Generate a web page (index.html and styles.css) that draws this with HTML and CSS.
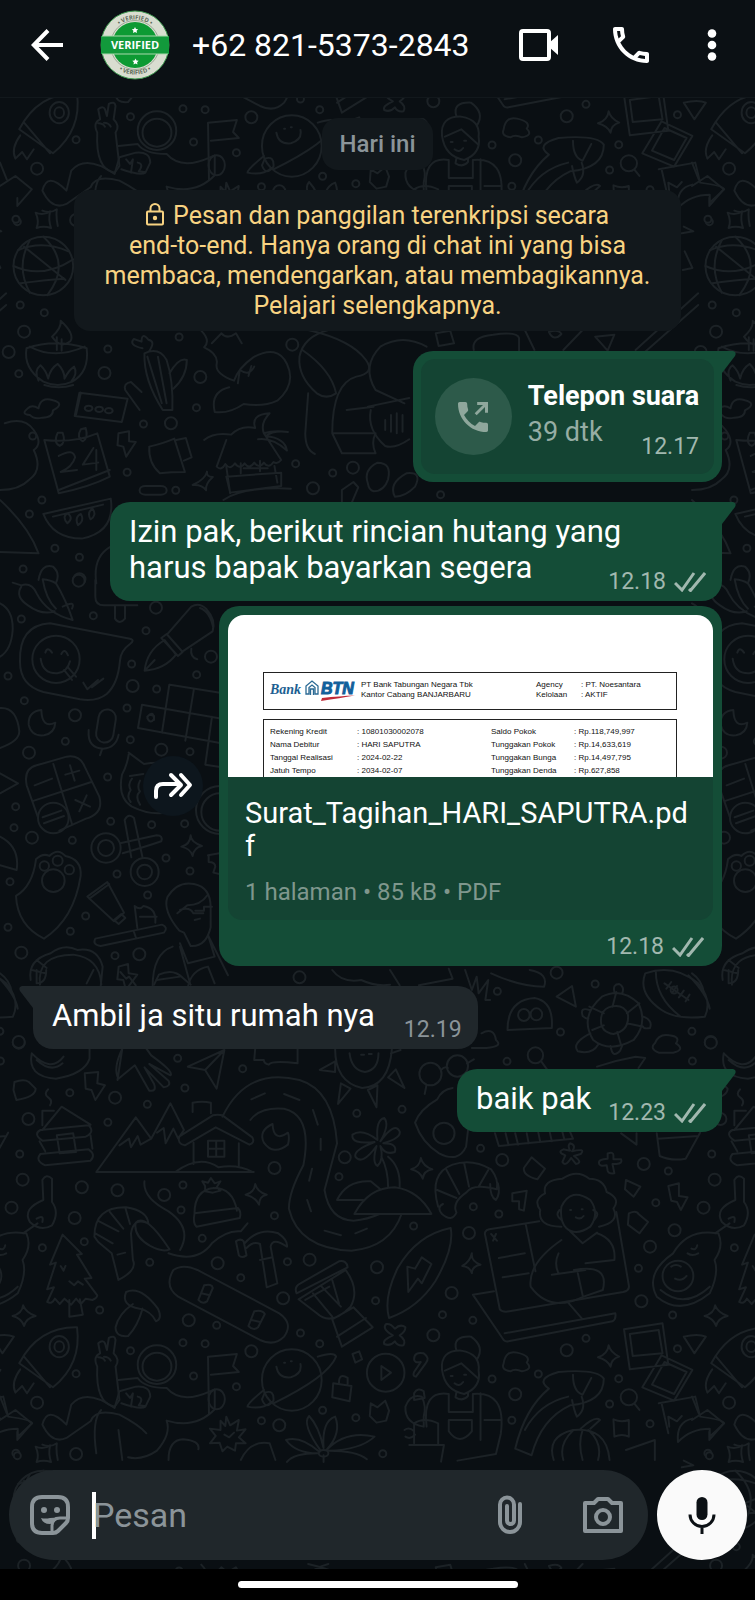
FILE: index.html
```html
<!DOCTYPE html>
<html lang="id">
<head>
  <meta charset="UTF-8" />
  <meta name="viewport" content="width=device-width, initial-scale=1.0"/>
  <title>+62 821-5373-2843</title>
  <link rel="stylesheet" href="styles.css">
</head>
<body>
  <svg class="wallpaper" aria-hidden="true">
    <defs>
      <g id="doodles">
        <!-- globe, candle, cactus, dog, hut, calendar -->
        <g transform="translate(0 90) scale(.4815 .3333)">
          <path class="dot" d="M36 395h0M42 645h0M92 668h0M224 777h0M372 741h0M39 851h0M408 953h0M298 1002h0M68 1038h0M264 1147h0M614 1121h0M691 1149h0M87 1230h0M61 1272h0M114 1375h0M165 1402h0M48 1437h0M365 1201h0M915 1214h0"/>
          <path class="dot-hole" d="M36 395h0M42 645h0M92 668h0M224 777h0M372 741h0M39 851h0M408 953h0M298 1002h0M68 1038h0M264 1147h0M614 1121h0M691 1149h0M87 1230h0M61 1272h0M114 1375h0M165 1402h0M48 1437h0M365 1201h0M915 1214h0"/>
          <path class="ring" d="M50 725h0M18 786h0M217 849h0M416 861h0M607 764h0M355 1000h0M650 1195h0M733 1133h0M165 1468h0"/>
          <path class="ring-hole" d="M50 725h0M18 786h0M217 849h0M416 861h0M607 764h0M355 1000h0M650 1195h0M733 1133h0M165 1468h0"/>
          <ellipse cx="90" cy="528" rx="62" ry="88"/>
          <path d="M62 450q-30 80 0 158M90 440q60 80 8 176M38 480q50-30 104 4M28 528q60 40 124-20M42 580q50-10 92-14M50 470l86 100"/>
          <path d="M74 368q16 10 30-4q-4 26 2 50q-16-8-30 0q6-20-2-46z"/>
          <path d="M55 775q60-30 125 0q6 70-30 100q-30 20-60 0q-42-40-35-100zM108 740q20-26 18-48q30 40 20 62q-20 24-38-14zM62 770q50 40 114 0M118 742v38M128 748v34M80 872q-10-30 4-46q12 16 16 40q4-30 20-44q14 20 14 44q8-24 20-36q8 20-6 44M92 885q30 14 60 0"/>
          <path d="M80 955q4-36 30-24q26 10 0 30q0 22-22 22q-18 6-26-8q-20-2-4-20q8-12 22 0z"/>
          <path d="M165 908l100 18-12 70-98-18zM168 908l-10 66"/>
          <circle cx="184" cy="955" r="8"/><circle cx="206" cy="958" r="8"/><circle cx="226" cy="962" r="8"/>
          <path d="M290 960l-30-60q-4-20 12-24l22 30M300 790q30-20 46 20q14 60 12 150h-20q-40-90-38-170zM296 775q-30-10-18-28l16 8q0-30 14-6q16 4 2 34M352 850q20-50 36-40q0 50-28 86M306 800l30 140M328 800l18 140"/>
          <path d="M418 722q20 30 6 50q30 20 26 50q-4 30 36 50q10-40 40-70q50-40 70 20q20 60-20 110q-30 20-70 10q-30 30-60 24q-10-60 30-74M440 760l20-30q12 20 30 0l12 30M494 880l4-40q20 20 30-10M516 858l6-30"/>
          <path d="M640 720q90 30 120 90q20 40-20 50q-50 20-50 170h90q-10 30 0 60h-70l-20-60M628 780q60 60 70 130q-20 20-40 0q-40-50-36-110q8-60 60-80M640 910l-6 120q0 50 20 62M720 960l56-10"/>
          <path d="M886 770q-50-40-96 0q-40 60-10 130l60 40M764 950l86-26M770 960q-8 60 30 108q20 10 50-20M800 990v30M812 975v50M824 970v60M836 975v50"/>
          <path d="M424 1050q20-24 56-16q20-30 50-20q-10-40 30-44q-20 30-12 60q20-10 50-4q-30-6-46 12q40 6 44 44q-30-40-60-34M470 1050l-20 80q10 14 18-8q10 20 20-2q10 20 20 0q10 20 20-2q10 20 20 0q10 20 20-2q8 8 16-6l-36-80M470 1130l8 80M570 1128l6 50M470 1160l114-12v40l-106 20zM500 1120v30M540 1112v32M506 1135h50M464 1230q40-40 140-34"/>
          <path d="M92 1050q60 10 110-20l26 130q-40 30-106 50zM122 1200l106-60M120 1028q-10 30 4 40q14-10 6-40zM168 1018q-10 24 4 36q12-10 6-40zM122 1098q30-24 34 4q-6 30-30 44l34-6M194 1074l-22 50 32-6M200 1080v60"/>
          <path d="M246 1030l22-6v30l14 2-20 44-6-30-12-4z"/>
          <path d="M310 1070q30-10 52-24l22 100q-30 0-52 4q-24-30-22-80zM366 1050l20-6 12 58-16 10"/>
          <path d="M430 1145q-4 24-30 40q20-2 28 16q-2-20 14-40q-14 0-12-16z"/>
          <rect x="290" y="1188" width="56" height="26" rx="12"/>
          <path d="M90 1272l140-46q10 100-60 120q-60 0-80-74zM110 1280l104-36M140 1300q-12-20 0-30q14 14 0 30zM162 1306q-8-24 6-34q8 20-6 34zM188 1288q-8-20 4-32q10 20-4 32z"/>
          <path d="M764 1180q-10-40 20-62q30 0 22 50q-8 36-30 36q-10-4-12-24zM820 1220q-14-40 24-70q34-6 18 40q-20 30-42 30zM710 1200l24-24 10 16-14 48h-20z"/>
          <path d="M10 1000q40-20 60 20q20 40 0 60q20 60-10 90q-20 30-60 30M0 1230q60 80 80 160l-80-4"/>
          <path d="M905 730l30-8 8 38-32 8zM984 780q-6-40 40-46q50-10 54 10v40M1090 720l20 60M1170 780l40-60M1236 740l40-6-14 48zM1320 780l130-170M1340 785l110-140M1140 726q20-10 26 6q-16 24-26-6z"/>
          <path d="M200 1480q-8-80 30-110M80 1470q6-50 30-40q16 20 6 50M1418 540l20-6-16-50M1420 410l20 14-24 6"/>
        </g>

        <!-- chili, sticker face, pen, calculator, paw, scissors -->
        <g transform="translate(0 580) scale(.3333)">
          <path class="dot" d="M64 117h0M280 107h0M438 152h0M395 252h0M24 288h0M73 362h0M470 327h0M590 284h0M381 384h0M391 479h0M196 484h0M570 515h0M323 591h0M47 680h0M42 743h0M217 781h0M332 724h0M455 734h0M554 731h0M498 834h0M570 873h0M351 882h0M30 905h0M443 945h0M257 1008h0M211 1054h0M24 1042h0M345 1127h0"/>
          <path class="dot-hole" d="M64 117h0M280 107h0M438 152h0M395 252h0M24 288h0M73 362h0M470 327h0M590 284h0M381 384h0M391 479h0M196 484h0M570 515h0M323 591h0M47 680h0M42 743h0M217 781h0M332 724h0M455 734h0M554 731h0M498 834h0M570 873h0M351 882h0M30 905h0M443 945h0M257 1008h0M211 1054h0M24 1042h0M345 1127h0"/>
          <path class="ring" d="M468 83h0M633 230h0M225 406h0M87 518h0M484 509h0M96 773h0M64 1118h0M418 1123h0M236 2h0M398 318h0"/>
          <path class="ring-hole" d="M468 83h0M633 230h0M225 406h0M87 518h0M484 509h0M96 773h0M64 1118h0M418 1123h0M236 2h0M398 318h0"/>
          <path d="M38 8l26 8q30-10 46 24q30 60 108 80q-20-60-50-110q-16-10-40-12q10 60 40 88M64 20q-20 30 20 56q40 30 80 18M188 80q40-20 28 6M286 0v50q0 26 26 26h100M345 76v40q14 20 30 0v-40"/>
          <path d="M150 130l240 46q16 4 0 16q-28 20-30 50q-6 70-40 100q-30 24-80 16l-110-22q-70-20-70-90q-4-110 90-116z"/>
          <circle cx="168" cy="238" r="71"/>
          <path d="M122 236q6 46 50 44q30-4 38-36M136 218q6-20 20 0M184 222q10-20 20 4M192 270l24 30M204 262l24 28M250 308l12 20 32-28M276 322l34-26"/>
          <path d="M434 272q6-60 60-92l34 44q-34 44-94 48zM434 272l30-32M484 174l16-12 48 54-14 12zM504 160l70-80q24-14 46 8q28 30 18 66l-90 60M600 84q30 10 40 60M574 206q-4 26 18 32"/>
          <path d="M124 390q-40 4-38 44q8 36 46 32q32-6 34-38q-40 20-42-38z"/>
          <rect x="292" y="388" width="52" height="100" rx="26" transform="rotate(9 318 438)"/>
          <path d="M266 450q-4 56 44 56q38-2 46-42M306 508l-6 18"/>
          <path d="M426 374l240 42M414 444l250 46M426 374l-12 70M508 314l-22 144M582 326l-26 156M510 314l150 24M636 410l-20 144l50 8M442 410q18-20 20 6q-10 18-20-2q2-14 20-6v12"/>
          <path d="M110 556l90-26q40-6 54 30l44 90q14 50-40 66l-80 36M110 556q-40 10-30 60l34 96M102 662l172-56M160 552l56 180M104 616l52-20M196 584l42-12M210 556l14 46M226 660l44 20M260 646l-22 48"/>
          <circle cx="160" cy="714" r="46"/>
          <path d="M128 712l56-20M132 730l60-22"/>
          <path d="M386 524q-4 30-20 60q-14 70 30 96q80 40 150 0q40-40 20-80M386 518l46 34q60-10 120 10M390 588l40-6M396 596q-14 16-4 34q-14 20 0 36M420 602q-10 20 0 32q-16 16 0 40"/>
          <circle cx="660" cy="690" r="72"/><circle cx="660" cy="696" r="56"/>
          <circle cx="318" cy="804" r="44"/><circle cx="318" cy="804" r="24"/><circle cx="434" cy="876" r="42"/><circle cx="434" cy="876" r="22"/>
          <path d="M360 790l110-24q20 0 14 18q-40 14-116 36M374 720q12-22 28-6l26 120M374 720l20 112"/>
          <path d="M572 766q0 20 34 32q-24 4-28 30q-6-22-34-28q26-6 28-34zM624 826l34-6M626 826v20q20 0 20 14l-6 18 18 4"/>
          <path d="M48 948q50-30 60-110q20-20 40-10q26-26 48 0q50 10 46 60q-20 130-110 188q-80-40-84-128z"/>
          <circle cx="133" cy="858" r="14"/><circle cx="173" cy="842" r="15"/><circle cx="208" cy="869" r="14"/><circle cx="160" cy="902" r="34"/>
          <path d="M262 950l60-44 50 92-30 26zM268 956l60-44M342 1020l22-18 12 12-20 18zM286 1076l200-42q20 8 6 24l-190 40q-26-4-16-22zM402 1056l6 18M412 1044l-8-66q16 14 26 0q40 6 36 50M420 1010h50"/>
          <path d="M538 1052q-50-60-36-100q30-50 80-40q50 10 50 70v60q-14 60-60 56l-20-40zM532 1000l30-24q40 0 60-30M540 990q30-10 40 10h30M586 992h26v-12h24M584 1020l16-4M540 1090l24 60 80-20-20-66M458 1220q0-100 60-120M540 1100l30 110M470 1200l70-10M624 1066l60 120M564 1220q10-50 60-60l20 50"/>
          <path d="M92 1200q-10-60 60-80q40-30 80-10q60-10 76 50l-6 60M120 1214q-10-90 100-90q80 10 84 90M96 1170l40 10M110 1140l30 24M356 1160l28-8 2 28 26 4-34 46-8-30-18-2z"/>
          <path d="M0 70q40 20 38 80q-4 60-38 80M0 384q50-4 58 70q0 30-58 50M0 580l54 30-54 30M0 770q60 30 50 100l-50-14M0 1180q30 20 36 60"/>
        </g>

        <!-- ball, turtle, sun, bananas behind the last messages -->
        <g transform="translate(0 970) scale(.4815 .3333)">
          <path class="dot" d="M369 265h0M504 296h0M1033 64h0M1164 186h0M1236 42h0M1437 184h0M1053 274h0M1438 273h0M1400 60h0"/>
          <path class="dot-hole" d="M369 265h0M504 296h0M1033 64h0M1164 186h0M1236 42h0M1437 184h0M1053 274h0M1438 273h0M1400 60h0"/>
          <path class="ring" d="M39 218h0M1476 216h0M622 22h0M1156 8h0"/>
          <path class="ring-hole" d="M39 218h0M1476 216h0M622 22h0M1156 8h0"/>
          <path d="M1340 10q60-30 110 30q30 50 14 100q-60 10-90-20q-50-50-34-110zM1362 4q0 80 50 134M1430 16q40 60 44 100M1380 40l50 50M1384 56l10-20M1396 68l10-20M1410 82l10-20M1424 94l8-20"/>
          <path d="M1054 180q0-90 56-96q40 10 36 90zM1188 48l8 62-40-30z"/>
          <ellipse cx="1088" cy="135" rx="12" ry="18"/><ellipse cx="1114" cy="133" rx="12" ry="18"/>
          <path d="M1250 80q40-30 76 20q20 60-10 110q-50 40-84 0q-30-70 18-130zM1264 112q30-14 40 20q4 50-30 60q-26-6-26-40q0-30 16-40zM1280 66l-8 44M1328 100l-26 30M1336 170l-34-10M1290 226l-8-40M1230 180l24-14M1224 110l30 20M1276 66q-4-24 10-24q12 10 6 28M1224 120q-20-10-14 18q8 10 12 8M1336 140q20 10 14 34q-14 4-16-6M1226 190q-40 30-26 54q30 10 42-20M1268 228q4 40 20 14l4-14"/>
          <path d="M1360 220q8-30 30-24q24 4 14 24q20 20-6 28h-30q-20-12-8-28zM1000 190q26-20 30 20q16 20-20 24h-30"/>
          <path d="M66 250q40 60 66 10M66 250q-10 70 50 76q60-14 70-60v-30M76 270q30 40 54 10M244 330l10-94M254 236q-20 60-8 90l34-40 30 76q16 4 10-20l-20-50 40 60q16-4 10-20l-40-50 44 34q8-10-40-60l-10-20"/>
          <path d="M390 290l76-50-16 116-24-56zM390 290l36 10M466 240l-40 60M176 310l28-4-2 34 16 6-20 44-8-30-12-4zM30 336q20-10 30 0l14 20q0 24-40 34l-6-30z"/>
          <path d="M530 236l-2 34h20q0 10 10 14q6-14 60-4v-44M696 236q0 100 56 118q56-4 62-118M664 300l32-26v32zM708 340l-6 62 26-46zM764 360l18 52 2-66zM806 322l34 32-18-56zM812 250l20-10M726 250q4 50 32 56q28-6 28-56M750 254h6M766 252h6"/>
          <ellipse cx="894" cy="312" rx="23" ry="34"/><ellipse cx="950" cy="288" rx="22" ry="32"/><ellipse cx="1112" cy="256" rx="16" ry="24"/>
          <path d="M916 300q8-12 14-6M886 344l-4 28M970 280l14-12M1124 274l12 24M1240 290q40-20 80-30l20 4-14 30"/>
          <path d="M1020 10q60 40 110 40q10-40-30-50M690 0q20 40 60 30q30 20 60 14M810 0l20 46M870 46l70-20-8-30M966 0l14 60 10-40 4 50 20-40-6 60h10M76 0v40q20 0 20-40M180 40l14-40M250 6l12 20 6-6 14 26M320 44l10-30q30-20 50 10l16 20"/>
        </g>

        <!-- mountains, road, surfboard, laptop, rocket, astronaut -->
        <g transform="translate(0 1080) scale(.4815 .3333)">
          <path class="dot" d="M145 38h0M384 24h0M306 73h0M224 127h0M41 222h0M741 100h0M835 88h0M704 290h0M998 205h0M1388 273h0M380 315h0M376 390h0M570 407h0M420 475h0M88 503h0M175 485h0M311 547h0M597 545h0M500 593h0M207 690h0M780 662h0M859 438h0M983 380h0M1036 402h0M1362 368h0M1326 565h0M1397 705h0M919 704h0M982 721h0M450 736h0M380 788h0M426 791h0M624 759h0M664 791h0M271 812h0M158 881h0M402 888h0M491 920h0M670 991h0M543 1022h0M739 1013h0M1118 882h0M1022 897h0M1285 896h0M1217 775h0M1407 806h0M1266 972h0M1350 1031h0M1063 1021h0M795 1121h0M33 1120h0"/>
          <path class="dot-hole" d="M145 38h0M384 24h0M306 73h0M224 127h0M41 222h0M741 100h0M835 88h0M704 290h0M998 205h0M1388 273h0M380 315h0M376 390h0M570 407h0M420 475h0M88 503h0M175 485h0M311 547h0M597 545h0M500 593h0M207 690h0M780 662h0M859 438h0M983 380h0M1036 402h0M1362 368h0M1326 565h0M1397 705h0M919 704h0M982 721h0M450 736h0M380 788h0M426 791h0M624 759h0M664 791h0M271 812h0M158 881h0M402 888h0M491 920h0M670 991h0M543 1022h0M739 1013h0M1118 882h0M1022 897h0M1285 896h0M1217 775h0M1407 806h0M1266 972h0M1350 1031h0M1063 1021h0M795 1121h0M33 1120h0"/>
          <path class="ring" d="M239 53h0M59 117h0M47 299h0M170 322h0M244 331h0M341 345h0M24 383h0M155 414h0M570 264h0M716 232h0M1043 240h0M1337 252h0M974 459h0M1350 500h0M1401 451h0M452 550h0M643 539h0M783 562h0M588 655h0M938 639h0M1332 664h0M392 721h0M900 766h0M522 814h0M1177 811h0M1070 943h0M77 968h0M580 1036h0M158 1122h0"/>
          <path class="ring-hole" d="M239 53h0M59 117h0M47 299h0M170 322h0M244 331h0M341 345h0M24 383h0M155 414h0M570 264h0M716 232h0M1043 240h0M1337 252h0M974 459h0M1350 500h0M1401 451h0M452 550h0M643 539h0M783 562h0M588 655h0M938 639h0M1332 664h0M392 721h0M900 766h0M522 814h0M1177 811h0M1070 943h0M77 968h0M580 1036h0M158 1122h0"/>
          <path d="M88 150l40-70 60 54M88 136v-44h24M84 150l100-14q14 20-6 34l-90 12q-20-20-4-32zM82 184l12 30M188 166l4 40M84 222l100-14q16 16 4 34l-94 14q-22-14-10-34zM118 166l34-6 6 56-34 4zM100 28q-10 14 0 24t4 24"/>
          <path d="M200 276l82-164 32 64 40-106 28 80M200 276h327M248 196l20-20 4 26 14-34 6 26 22-18M326 158l14-14 4 46 16-44 10 30 12-26M372 170l70-64q10-4 20 0l62 66q6 16-6 22l-70-52-64 54q-16-4-12-26zM402 188v64M496 190v70M400 96v-28q20-6 38 0v32M364 276q50-54 90-14q40-10 70 14M432 182h34v48h-34zM449 182v48M432 206h34"/>
          <path d="M462 110q50-150 160-110q70 30 78 190l-26 140q10 90 60 92q30-4 54-20M520 120q20-40 70-34q60 20 40 170q-30 80-30 130q20 120 130 126q80-10 104-110M522 58l28-18M590 42l32 18M650 90l10 44M666 176v34M648 266l-6 36M638 360l8 34M674 452l34 14M738 460l24-14"/>
          <path d="M566 132q-30 20-18 56q20 40 50 6q4-20 0-36q-30 30-32-26z"/>
          <path d="M784 180q-4-60 14-66q12 20-8 70q30-60 40-30q4 20-34 36q30 0 24 26q-20 10-30-18q8 40-6 60q-12-10-2-60q-30 60-44 32q-4-20 40-44q-50 8-46-22q20-20 52 16zM792 230q14 40 14 90M806 230q26 30 24 90M700 360q20-60 70-56l20 24M700 360h54M736 402q30-80 84-80q50 10 76 80z"/>
          <path d="M862 128q10-40 46-70q10-30 32-34M862 128q14 60 50 92q40 30 56-20l4-50"/>
          <ellipse cx="922" cy="160" rx="22" ry="32"/>
          <path d="M1028 160l8 38 154-22-6-20M1050 160l6 34M1070 160l6 34M1094 160l4 30M1118 158l4 28M1142 158l4 26M1168 156l4 22M1290 160l32 34v-34M1364 160l6 68q24 16 54 8l30-78M1366 176l84-8"/>
          <path d="M874 234q4 24 24 34q-18 4-20 28q-6-22-24-28q18-8 20-34zM530 312q4 24 24 32q-16 4-16 30q-8-24-28-30q18-6 20-32zM980 520q-2 24 18 34q-18 4-18 26q-4-20-20-22q16-12 20-38zM48 676q6 22 26 32q-20 6-24 30q-6-24-24-30q20-8 22-32zM1264 796q4 22 22 34q-16 6-18 30q-6-20-26-28q20-10 22-36z"/>
          <path d="M910 380q-20-100 30-126q40-20 80 14q16 30 12 60q-50-20-64 10q-30 30-20 60q-10 30-30 4q-12-20 2-30M908 330l40 24M926 266l28 76M964 250l10 70M1014 270l-20 50M1018 312q0 40 12 48q10-20 4-50"/>
          <path d="M1104 232l28 34-16 32q-30-10-28-34zM1184 190q14 6 4 24q30-10 18 8l-14 6q20 20 4 24l-10-18q-12 28-18 12l6-20q-18-10-4-18l14 4q-6-16 0-22zM1262 220q12-6 12 6v12h16q4 12-10 14h-8l4 28q-12 2-14-8l-2-16q-16 4-16-6q-2-12 18-14z"/>
          <path d="M90 360l-2-60q8-20 20-4v70q16 30 0 70q-24 20-46-10q-16-40 28-66M76 416q16-14 12 10M78 430l-30 30"/>
          <path d="M300 304q-4 50 50 90q50 50 24 116M282 428q20-30 70 80q-14 10-40-10q-36-30-30-70zM196 470q0-90 66-88q44 10 46 48q-30-20-36 30l4 80q10 30-30 60l-14-80-28-34zM206 424l40 30M228 396l28 50M260 382l10 50M198 460l36 30M244 524l16-6M350 520q60 30 90-30q30-40 60-36l14-24"/>
          <path d="M404 400q0-70 40-76q40 0 48 68M404 400l90-16q8 12 4 30l-90 26q-8-10-4-40zM426 318l-6-14 12 4 6-14 8 16 12-6-8 18 8 10-16 6-16-4z"/>
          <path d="M490 484q10-10 16 0l6 42q-10 10-16 0zM508 490q30-50 70-30q20 20 18 40q-30-30-34 0l14 110-22 12-14-130q-14-10-28 12M540 540l26-8"/>
          <path d="M130 464l-26 90 12-6-18 80 14-6-14 44q10 8 16-10l10 16 10-16 14 18 10-18 10 16 10-16 14 4q10-6 10-14l-26-50 14-2-30-70 10-2zM144 660v50l28-6-6-46M126 558l6 14 4-14M144 604l10 12 8-12 10 10"/>
          <path d="M262 636q30-20 66 50q10 30-4 38q-10-30-34-38q-40-10-28-50zM276 672q-30 30-36 70q0 30 26 26q20-30 30-82"/>
          <path d="M360 570q20-20 50 0l170 130q30 30 10 70q-20 30-50 10l-170-130q-30-30-10-80zM412 660l12-44q16-6 18 8l-12 40q-10 10-18-4zM516 738l12-44q16-6 22 8l-14 40q-10 12-20-4zM418 640l18 6M522 720l18 6"/>
          <path d="M616 640q-6-20 8-30l80-66q16-4 18 18zM620 658l98-88q30 60 10 110q-40 60-70 20zM650 640l40 70M668 620l40 60M690 600l14 70M634 660l50-40M690 718l44-36 40 60-64 58zM700 770l60-56"/>
          <path d="M936 444q-70 20-110 120q-30 90-18 150q60-30 96-110q40-100 32-160zM876 532l20 20-20 58-8-14-20 40-2-76 16 6z"/>
          <path d="M1120 424l-104 24q-12 4-8 20l30 220q6 10 20 6l236-58q14-4 12-20l-26-220M1092 434l20 140M1020 462l12 20M1030 462l-6 20M1036 534l54-14M1044 592l54-12M1026 634l-44 10 64 136q4 6 10 4l216-60q8-6 6-24l-230 60M1180 668l30 50"/>
          <path d="M1166 440q-50 0-44-50q-16-30 10-50q-6-40 36-44q30-30 56 0q30 0 36 40q30 20 14 50q14 40-30 54M1166 380q20-60 60-20q20 40 0 80q-30 30-50 4q-14-20-10-64zM1162 390q-10 16 4 30M1232 390q16 10 2 30M1184 390h2M1208 388h2M1196 412q10 8 16-4M1184 454l26 36 30-32M1166 480q-70 70-64 140q40 80 110 30l40-20q14-80-60-60M1146 584l70-14M1160 520q-10 30 0 60M1240 460q40 20 36 80l-60 10M1200 580l10 66"/>
          <path d="M1300 300l30 20-14 30-18-22zM1306 400q16-10 20 2l20 24-18 34-24-26zM1388 318l22-8v38l18 4-14 38-8-24-12-4zM1064 340l30-8-6 60-10-4v-24h-14z"/>
          <path d="M1488 460q-60-14-90 60q-60 60-34 130q50 60 110-10q20-60 10-100q20-40 8-80zM1372 630q50 60 102-10"/>
          <ellipse cx="1408" cy="588" rx="32" ry="46"/>
          <path d="M1394 560q10-10 20 0M1402 596q14 10 24-8M1428 520q10 10 22 0M1436 506q10 6 12-10"/>
          <path d="M40 850q40-110 120-108q10 110-50 180zM50 830l54 92M42 868q-20 40-10 70l14-20 10 22 14-30"/>
          <ellipse cx="123" cy="800" rx="20" ry="32"/><ellipse cx="123" cy="800" rx="10" ry="16"/>
          <path d="M202 860q-10-30 6-40l-4-30q10-12 14 0l4 20 4-36q12-10 14 6l-4 40q14 20 4 40l8 100-10 20q-40-10-36-120M204 832q10 0 14 10M216 830q10 0 14 12"/>
          <ellipse cx="326" cy="854" rx="40" ry="58"/>
          <ellipse cx="326" cy="860" rx="30" ry="42"/>
          <path d="M246 900l40-6q14 30 60 30q30 50 90 10l10-6v60q-40 60-100 34q10 40-20 90q-30 30-60 20M238 984l10-50 34-14q30-4 30 30l-10 30q-10 10-50-10M262 940l8 14 6-14-4 40M286 950q14 4 2 26l12 2M238 984q-60-60-90-10l-10 60q-40-60-50 0q20 60 50 40l50-50q10-40 60-20q40 30 56 56M200 1120q-10-100 10-130M246 1050l8 90M434 1000l-2-170 60-8-8 36 12 18-58 8"/>
          <ellipse cx="450" cy="958" rx="17" ry="30"/>
          <ellipse cx="606" cy="900" rx="62" ry="92"/>
          <path d="M574 860q4 36 30 32q24-10 20-40M590 848h2M604 844h2M660 830q34-16 38 0q-16 60-130 140M548 930q-34 40-34 50q30 10 50-14M550 938q20-10 18 24q-16 30-24-4z"/>
          <path d="M732 822l14-8 6 24-14 10zM692 910l38 8-4 46-36-12zM704 908q0-30 18-14v18M860 838q0-24 20-18q14 14 4 30l-20 40q-8 0-4-14l14-30q-14 4-14-8zM816 766q-24-20-14-34q10-2 18 14q12-16 22-4q0 14-12 24q14 14 8 30q-12 4-18-12q-10 16-22 8q-4-12 18-26z"/>
          <ellipse cx="801" cy="878" rx="39" ry="57"/><path d="M792 858l20 20-20 22z"/>
          <path d="M948 812q-10-44 30-42q30 30 12 70M918 870q-4-60 40-58q40 10 36 60q6 50-30 70q-40-10-46-72zM924 872l34-22 34 44M936 888h4M964 884h4M944 910q10 12 18-4M948 936l-2 16q16 14 26-4v-12M886 1040q-10-110 46-98v54h50v-54q70-10 58 120l-10 60-80 20M932 1020h48v34q-26 46-48 0zM998 940v140M1006 1020h36"/>
          <path d="M842 980q10-40 34-30q10 30 4 60v30q-40-10-38-60zM860 940q8-20 20-6l2 20-22 6zM850 1095h72l-6 50M860 1090v-60q20-20 50 0v64M840 1050q10-10 20 4M842 1070q10 10 20-6"/>
          <path d="M1046 850q4-40 28-32q30 10 20 30q14 20-10 26q-14-10-24 0q-20-4-14-24z"/>
          <path d="M1070 1106q20-120 70-180q-30-30 20-50q80-10 94 20q0 70-70 80q-60 40-80 150zM1188 960q4 30 10 50q20-20 10-60M1190 884q0 50 20 60l18-50M1090 1050q30-80 90-100"/>
          <ellipse cx="1306" cy="952" rx="17" ry="24"/>
          <path d="M1318 972l10 18M1296 748l80-18 12 124-80 14zM1308 762l60-12 8 70-62 8zM1374 826l64 44-38 92-66-40zM1380 846l46 30-26 66-46-28zM1420 770q30-10 46 0l-24 50zM1368 970l76-20 10 60q50 10 50 20l-30 40v-24q-40 0-66 40q-4-60 30-70M1374 970l14 90M1390 1040l-2-30 18 14 10-16"/>
          <path d="M88 1094q16 10 30-4q-2 24 2 50M770 970l14 12 16-20 8 30-6 30-20 6-14-20zM0 950l14 50M0 1020l32-30 34 40-30 50v-24M470 1010l8 26 18-16-4 32 18-4-14 24 14 18h-20l-2 22-16-12-10 14-6-26-20 2 12-22-12-22 22 4v-28l10 16zM466 1064l10 8 10-14"/>
          <path d="M666 1112q-40-80-24-104q20 30 30 96q-4-80 24-94q14 50-18 100q40-60 100-40q-30 40-96 42q60 0 80 26M664 1116q-40-50-70-36q20 40 66 40q-50 0-64 26M672 1126v20"/>
          <circle cx="672" cy="1120" r="10"/>
          <path d="M350 1140q0-60 30-62q36 4 32 30M500 1140q20-60 60-50l12 50M1150 1140q-16-70 40-90q70-10 76 90M1190 1052q-30 40-20 88M1210 1050q-10 40 0 90M1222 1050q30 40 20 90M1206 1046q30-40 40-26l-20 26M1274 1018q16 10 32 2v50q-14-10-30 0zM1300 1110l60-30v60"/>
        </g>
      </g>
    </defs>
    <g class="doodle-lines">
      <use href="#doodles"/>
      <use href="#doodles" x="692"/>
      <use href="#doodles" x="-692"/>
      <use href="#doodles" y="-1234"/>
      <use href="#doodles" x="692" y="-1234"/>
      <use href="#doodles" y="1234"/>
      <use href="#doodles" x="692" y="1234"/>
    </g>
  </svg>

  <header class="topbar">
    <button type="button" class="icon-button back" aria-label="Kembali">
      <svg width="32" height="32" viewBox="0 0 32 32" fill="none" stroke="#fff" stroke-width="4"><path d="M17 1.500L2.800 16L17 30.500M3 16H32"/></svg>
    </button>
    <svg class="avatar" width="70" height="70" viewBox="0 0 70 70" aria-hidden="true">
      <defs>
        <path id="arcTop" d="M9.500 35a25.500 25.500 0 0 1 51 0"/>
        <path id="arcBottom" d="M5.500 35a29.500 29.500 0 0 0 59 0"/>
      </defs>
      <circle cx="35" cy="35" r="34" fill="#d9ddd0" stroke="#3f9a50" stroke-width="1"/>
      <circle cx="35" cy="35" r="24.500" fill="none" stroke="#8d9a86" stroke-width=".8"/>
      <circle cx="35" cy="35" r="23" fill="#0d9a33"/>
      <text class="seal-small" text-anchor="middle"><textPath href="#arcTop" startOffset="50%">• VERIFIED •</textPath></text>
      <text class="seal-small" text-anchor="middle"><textPath href="#arcBottom" startOffset="50%">• VERIFIED •</textPath></text>
      <path d="M1 26h68v18H1z" fill="#12993b"/>
      <path d="M2 26h66M2 44h66" stroke="#a9d8ac" stroke-width="1"/>
      <path d="M35 17l1 2 2.200.3-1.600 1.500.4 2.200-2-1-2 1 .4-2.200-1.600-1.500L34 19zM35.500 48.500l1 2 2.200.3-1.600 1.500.4 2.200-2-1-2 1 .4-2.200-1.600-1.500 2.200-.3z" fill="#fff"/>
      <text class="seal" x="35" y="39" text-anchor="middle">VERIFIED</text>
    </svg>
    <h1 class="contact">+62 821-5373-2843</h1>
    <button type="button" class="icon-button" aria-label="Panggilan video">
      <svg width="40" height="32" viewBox="0 0 40 32"><rect x="2" y="2" width="28" height="28" rx="2" fill="none" stroke="#fff" stroke-width="4"/><path d="M30 14l9-8v20l-9-8z" fill="#fff"/></svg>
    </button>
    <button type="button" class="icon-button call" aria-label="Panggilan suara">
      <svg width="36" height="36" viewBox="3 3 18 18" fill="#fff"><path d="M6.540 5c.06.89.21 1.760.45 2.590l-1.200 1.200c-.41-1.200-.67-2.470-.76-3.790h1.510m9.860 12.020c.85.24 1.720.39 2.600.45v1.490c-1.320-.09-2.590-.35-3.800-.75l1.200-1.190M7.500 3H4c-.55 0-1 .45-1 1 0 9.390 7.610 17 17 17 .55 0 1-.45 1-1v-3.490c0-.55-.45-1-1-1-1.240 0-2.450-.2-3.570-.57-.1-.04-.21-.05-.31-.05-.26 0-.51.1-.71.29l-2.200 2.200c-2.830-1.450-5.150-3.760-6.590-6.590l2.200-2.200c.28-.28.36-.67.25-1.020C8.700 6.450 8.500 5.250 8.500 4c0-.55-.45-1-1-1z"/></svg>
    </button>
    <button type="button" class="icon-button more" aria-label="Opsi lainnya">
      <svg width="10" height="32" viewBox="0 0 10 32" fill="#fff"><circle cx="5" cy="4.500" r="4.300"/><circle cx="5" cy="16" r="4.300"/><circle cx="5" cy="27.500" r="4.300"/></svg>
    </button>
  </header>

  <main class="chat">
    <p class="date">Hari ini</p>
    <p class="notice"><svg class="lock" width="18" height="23" viewBox="0 0 18 23" fill="none" stroke="#f8d382" stroke-width="2"><rect x="1" y="8.500" width="16" height="13" rx="1"/><path d="M4.500 8.500V5.500a4.500 4.500 0 0 1 9 0v3"/><circle cx="9" cy="15" r="1.200" fill="#f8d382"/></svg> Pesan dan panggilan terenkripsi secara<br>end-to-end. Hanya orang di chat ini yang bisa<br>membaca, mendengarkan, atau membagikannya. Pelajari selengkapnya.</p>

    <article class="bubble out tail call-bubble">
      <div class="call-card">
        <span class="call-badge">
          <svg width="30" height="30" viewBox="3 3 18 18" fill="#8fa79c"><path d="M6.620 10.790c1.440 2.830 3.760 5.140 6.590 6.590l2.200-2.200c.27-.27.67-.36 1.020-.24 1.120.37 2.330.57 3.570.57.55 0 1 .45 1 1V20c0 .55-.45 1-1 1C10.600 21 3 13.400 3 4c0-.55.45-1 1-1h3.500c.55 0 1 .45 1 1 0 1.250.2 2.450.57 3.570.11.35.03.74-.25 1.020z"/><path d="M13 9.800l5-5h-3.500V3H21v6.500h-1.800V6L14.200 11z"/></svg>
        </span>
        <div class="call-info">
          <strong>Telepon suara</strong>
          <span>39 dtk</span>
        </div>
        <time class="time">12.17</time>
      </div>
    </article>

    <article class="bubble out tail text-bubble wide">
      Izin pak, berikut rincian hutang yang<br>harus bapak bayarkan segera
      <span class="meta"><time class="time">12.18</time><svg class="ticks" viewBox="0 0 32 20"><path d="M1 11l7 7L20 1M15 17l1.500 1.500L31 1"/></svg></span>
    </article>

    <div class="file-row">
      <button type="button" class="forward" aria-label="Teruskan">
        <svg width="40" height="28" viewBox="0 0 40 28" fill="none" stroke="#fff" stroke-width="4" stroke-linecap="round" stroke-linejoin="round"><path d="M3 25V19q0-7 7-7h15M18 3l10 10-10 10M28 3l9 10-9 10"/></svg>
      </button>
      <article class="bubble out file-bubble">
        <div class="preview">
          <div class="letterhead">
            <svg class="bank-logo" width="86" height="24" viewBox="0 0 86 24">
              <text class="logo-bank" x="0" y="14">Bank</text>
              <path d="M36 14V6l6-5 6 5v8h-3V7.500L42 5l-3 2.500V14zM40.500 15V9h3v6" fill="none" stroke="#2b6a94" stroke-width="1.300"/>
              <text class="logo-btn" x="51" y="14">BTN</text>
              <path d="M52 18q18-2 33-2.500Q70 18 51 21z" fill="#c02a38"/>
            </svg>
            <p class="branch">PT Bank Tabungan Negara Tbk<br>Kantor Cabang BANJARBARU</p>
            <table class="agency">
              <tr><th>Agency</th><td>: PT. Noesantara</td></tr>
              <tr><th>Kelolaan</th><td>: AKTIF</td></tr>
            </table>
          </div>
          <div class="details">
            <table class="account">
              <tr><th>Rekening Kredit</th><td>: 10801030002078</td><th>Saldo Pokok</th><td>: Rp.118,749,997</td></tr>
              <tr><th>Nama Debitur</th><td>: HARI SAPUTRA</td><th>Tunggakan Pokok</th><td>: Rp.14,633,619</td></tr>
              <tr><th>Tanggal Realisasi</th><td>: 2024-02-22</td><th>Tunggakan Bunga</th><td>: Rp.14,497,795</td></tr>
              <tr><th>Jatuh Tempo</th><td>: 2034-02-07</td><th>Tunggakan Denda</th><td>: Rp.627,858</td></tr>
            </table>
          </div>
        </div>
        <div class="file-info">
          <p class="file-name">Surat_Tagihan_HARI_SAPUTRA.pdf</p>
          <p class="file-meta">1 halaman • 85 kB • PDF</p>
        </div>
        <span class="meta"><time class="time">12.18</time><svg class="ticks" viewBox="0 0 32 20"><path d="M1 11l7 7L20 1M15 17l1.500 1.500L31 1"/></svg></span>
      </article>
    </div>

    <article class="bubble in tail text-bubble">
      Ambil ja situ rumah nya
      <span class="meta"><time class="time">12.19</time></span>
    </article>

    <article class="bubble out tail text-bubble">
      baik pak
      <span class="meta"><time class="time">12.23</time><svg class="ticks" viewBox="0 0 32 20"><path d="M1 11l7 7L20 1M15 17l1.500 1.500L31 1"/></svg></span>
    </article>
  </main>

  <form class="composer">
    <div class="field">
      <button type="button" class="icon-button" aria-label="Stiker">
        <svg width="40" height="40" viewBox="0 0 40 40" fill="none" stroke="#8b9499" stroke-width="4" stroke-linejoin="round"><path d="M12 2h16q10 0 10 10v11q0 3-2 5l-8 8q-2 2-5 2H12Q2 38 2 28V12Q2 2 12 2z"/><path d="M22 37v-6q0-8 8-8h7" stroke-width="3"/><path d="M11 23q4 1 9 0 5 0 7-1-1 6-7 7-7 0-9-6z" fill="#8b9499" stroke="none"/><circle cx="14" cy="15" r="3" fill="#8b9499" stroke="none"/><circle cx="27" cy="15" r="3" fill="#8b9499" stroke="none"/></svg>
      </button>
      <span class="caret"></span>
      <input type="text" class="message-input" placeholder="Pesan" aria-label="Pesan">
      <button type="button" class="icon-button" aria-label="Lampirkan">
        <svg width="26" height="40" viewBox="0 0 26 40" fill="none" stroke="#8b9499" stroke-width="4" stroke-linecap="round"><path d="M23 9v18a10 10 0 0 1-20 0V9.500a7 7 0 0 1 14 0v16a3.500 3.500 0 0 1-7 0V11"/></svg>
      </button>
      <button type="button" class="icon-button camera" aria-label="Kamera">
        <svg width="40" height="36" viewBox="0 0 40 36" fill="none" stroke="#8b9499" stroke-width="4" stroke-linejoin="round"><path d="M2 6h9l4-4h10l4 4h9v28H2z"/><circle cx="20" cy="20" r="7"/></svg>
      </button>
    </div>
    <button type="button" class="mic" aria-label="Pesan suara">
      <svg width="28" height="38" viewBox="0 0 28 38"><rect x="8.500" y="1" width="11" height="23" rx="5.500" fill="#0b1014"/><path d="M2 18.500a12 12 0 0 0 24 0M14 31v7" fill="none" stroke="#0b1014" stroke-width="3"/></svg>
    </button>
  </form>
  <footer class="navbar"><span class="home-bar"></span></footer>
</body>
</html>
```
FILE: styles.css
```css
* {
  box-sizing: border-box;
}
body {
  position: relative;
  display: flex;
  flex-direction: column;
  min-height: 100vh;
  margin: 0;
  background-color: #0a0f13;
  color: #fff;
  font-family: Roboto, sans-serif;
}
p, h1 {
  margin: 0;
}
button {
  padding: 0;
  border: none;
  background: none;
  cursor: pointer;
}
svg {
  display: block;
}

/* wallpaper */
.wallpaper {
  position: absolute;
  inset: 0;
  z-index: -1;
  width: 100%;
  height: 100%;
  overflow: hidden;
}
.doodle-lines {
  fill: none;
  stroke: #1c2226;
  stroke-width: 2;
  stroke-linejoin: round;
  stroke-linecap: round;
}
.wallpaper path,
.wallpaper ellipse,
.wallpaper circle,
.wallpaper rect {
  vector-effect: non-scaling-stroke;
}
.dot {
  stroke-width: 9px;
}
.dot-hole {
  stroke: #0a0f13;
  stroke-width: 5px;
}
.ring {
  stroke-width: 14px;
}
.ring-hole {
  stroke: #0a0f13;
  stroke-width: 10px;
}

/* top bar */
.topbar {
  display: flex;
  align-items: center;
  height: 98px;
  padding: 0 38px 8px 31px;
  background: #0b1014;
  border-bottom: 1px solid #12181c;
}
.icon-button {
  flex: none;
}
.avatar {
  flex: none;
  margin-left: 37px;
}
.seal {
  fill: #fff;
  font: bold 11px "Open Sans", sans-serif;
}
.seal-small {
  fill: #5c6b58;
  font: bold 6px "Open Sans", sans-serif;
}
.contact {
  flex: 1;
  margin-left: 22px;
  font-size: 32px;
  font-weight: 400;
  white-space: nowrap;
}
.call {
  margin-left: 54px;
}
.more {
  margin-left: 58px;
}

/* chat */
.chat {
  flex: 1;
  display: flex;
  flex-direction: column;
  align-items: flex-end;
  gap: 20px;
  padding: 20px 33px;
}
.date {
  align-self: center;
  padding: 12px 17px;
  border-radius: 16px;
  background: #12181c;
  color: #8b9499;
  font-size: 24px;
  font-weight: 500;
  line-height: 28px;
}
.notice {
  align-self: center;
  width: 607px;
  max-width: 100%;
  padding: 11px 24px 10px;
  border-radius: 16px;
  background: #12181c;
  color: #f8d382;
  font-size: 25px;
  line-height: 30px;
  text-align: center;
}
.lock {
  display: inline-block;
  margin-right: 3px;
  vertical-align: -2px;
}
.bubble {
  position: relative;
  border-radius: 20px;
}
.out {
  background: #144d37;
}
.in {
  align-self: flex-start;
  background: #20272b;
}
.out.tail {
  border-top-right-radius: 0;
}
.in.tail {
  border-top-left-radius: 0;
}
.tail::after {
  content: "";
  position: absolute;
  top: 0;
  left: 100%;
  width: 14px;
  height: 22px;
  background: inherit;
  clip-path: path("M0 0H11Q15 1 13 5L0 22Z");
}
.in.tail::after {
  left: auto;
  right: 100%;
  transform: scaleX(-1);
}
.time {
  color: #a1b8af;
  font-size: 23px;
  line-height: 26px;
}
.in .time {
  color: #8b9499;
}
.meta {
  display: flex;
  align-items: center;
  gap: 8px;
}
.ticks {
  width: 32px;
  height: 20px;
  fill: none;
  stroke: #a1b8af;
  stroke-width: 3;
}

.call-bubble {
  padding: 8px;
}
.call-card {
  display: flex;
  align-items: center;
  height: 115px;
  padding: 0 15px 0 14px;
  border-radius: 14px;
  background: #144433;
}
.call-badge {
  display: flex;
  align-items: center;
  justify-content: center;
  width: 77px;
  height: 77px;
  border-radius: 50%;
  background: #2d5a4a;
}
.call-info {
  display: grid;
  margin: 0 0 6px 16px;
  color: #96ada4;
  font-size: 27px;
  line-height: 36px;
}
.call-info strong {
  color: #fff;
}
.call-card .time {
  align-self: flex-end;
  margin: 0 0 14px -58px;
}

.text-bubble {
  padding: 12px 16px 15px 19px;
  font-size: 31px;
  line-height: 36px;
}
.text-bubble .meta {
  float: right;
  margin: 19px 0 -14px 17px;
}
.in .meta {
  margin-left: 29px;
}
.wide {
  width: 612px;
  max-width: 100%;
}

.file-row {
  display: flex;
  align-items: center;
  justify-content: flex-end;
  gap: 16px;
  margin-top: -15px;
}
.forward {
  display: flex;
  flex: none;
  align-items: center;
  justify-content: center;
  width: 60px;
  height: 60px;
  border-radius: 50%;
  background: #0d161d;
}
.file-bubble {
  width: 503px;
  padding: 9px 9px 6px;
}
.preview {
  height: 162px;
  padding: 57px 36px 0 35px;
  border-radius: 16px 16px 0 0;
  background: #fff;
  color: #111;
  font-family: "Liberation Sans", Arial, sans-serif;
  font-size: 8px;
  overflow: hidden;
}
.letterhead {
  display: flex;
  height: 38px;
  padding: 7px 6px;
  border: 1px solid #222;
}
.bank-logo {
  flex: none;
}
.logo-bank {
  fill: #1d5f92;
  font: italic bold 14px "Liberation Serif", serif;
}
.logo-btn {
  fill: #12609b;
  stroke: #12609b;
  font: italic bold 16px "Liberation Sans", sans-serif;
}
.branch {
  flex: 1;
  margin-left: 5px;
  line-height: 10px;
}
table {
  border-collapse: collapse;
}
th, td {
  padding: 0;
  font-weight: 400;
  text-align: left;
  white-space: nowrap;
}
.agency {
  width: 134px;
  height: 20px;
  line-height: 10px;
}
.agency th {
  width: 45px;
}
.details {
  height: 80px;
  margin-top: 9px;
  padding: 5px 6px;
  border: 1px solid #222;
}
.account {
  width: 100%;
  table-layout: fixed;
  line-height: 13px;
}
.account th {
  width: 87px;
}
.account td {
  width: 134px;
}
.account td + th {
  width: 83px;
}
.account th + td:last-child {
  width: auto;
}
.file-info {
  padding: 20px 19px 14px 17px;
  border-radius: 0 0 14px 14px;
  background: #144433;
}
.file-name {
  font-size: 29px;
  line-height: 33px;
  word-break: break-all;
}
.file-meta {
  margin-top: 15px;
  color: #7f978d;
  font-size: 24px;
  line-height: 28px;
}
.file-bubble .meta {
  justify-content: flex-end;
  padding: 14px 9px 0 0;
}

/* composer */
.composer {
  display: flex;
  gap: 9px;
  padding: 0 8px 9px 9px;
}
.field {
  flex: 1;
  display: flex;
  align-items: center;
  min-width: 0;
  height: 90px;
  padding: 0 25px 0 21px;
  border-radius: 45px;
  background: #20272b;
}
.caret {
  width: 4px;
  height: 47px;
  margin: 0 -3px 0 22px;
  background: #fff;
}
.message-input {
  flex: 1;
  min-width: 0;
  height: 60px;
  padding: 0;
  border: none;
  outline: none;
  background: none;
  color: #fff;
  font: 34px Roboto, sans-serif;
}
.message-input::placeholder {
  color: #8b9499;
  opacity: 1;
}
.camera {
  margin-left: 60px;
}
.mic {
  display: flex;
  flex: none;
  align-items: center;
  justify-content: center;
  width: 90px;
  height: 90px;
  border-radius: 50%;
  background: #fafafa;
}
.navbar {
  display: flex;
  align-items: center;
  justify-content: center;
  height: 31px;
  background: #000;
}
.home-bar {
  width: 280px;
  height: 7px;
  border-radius: 4px;
  background: #fff;
}
```
